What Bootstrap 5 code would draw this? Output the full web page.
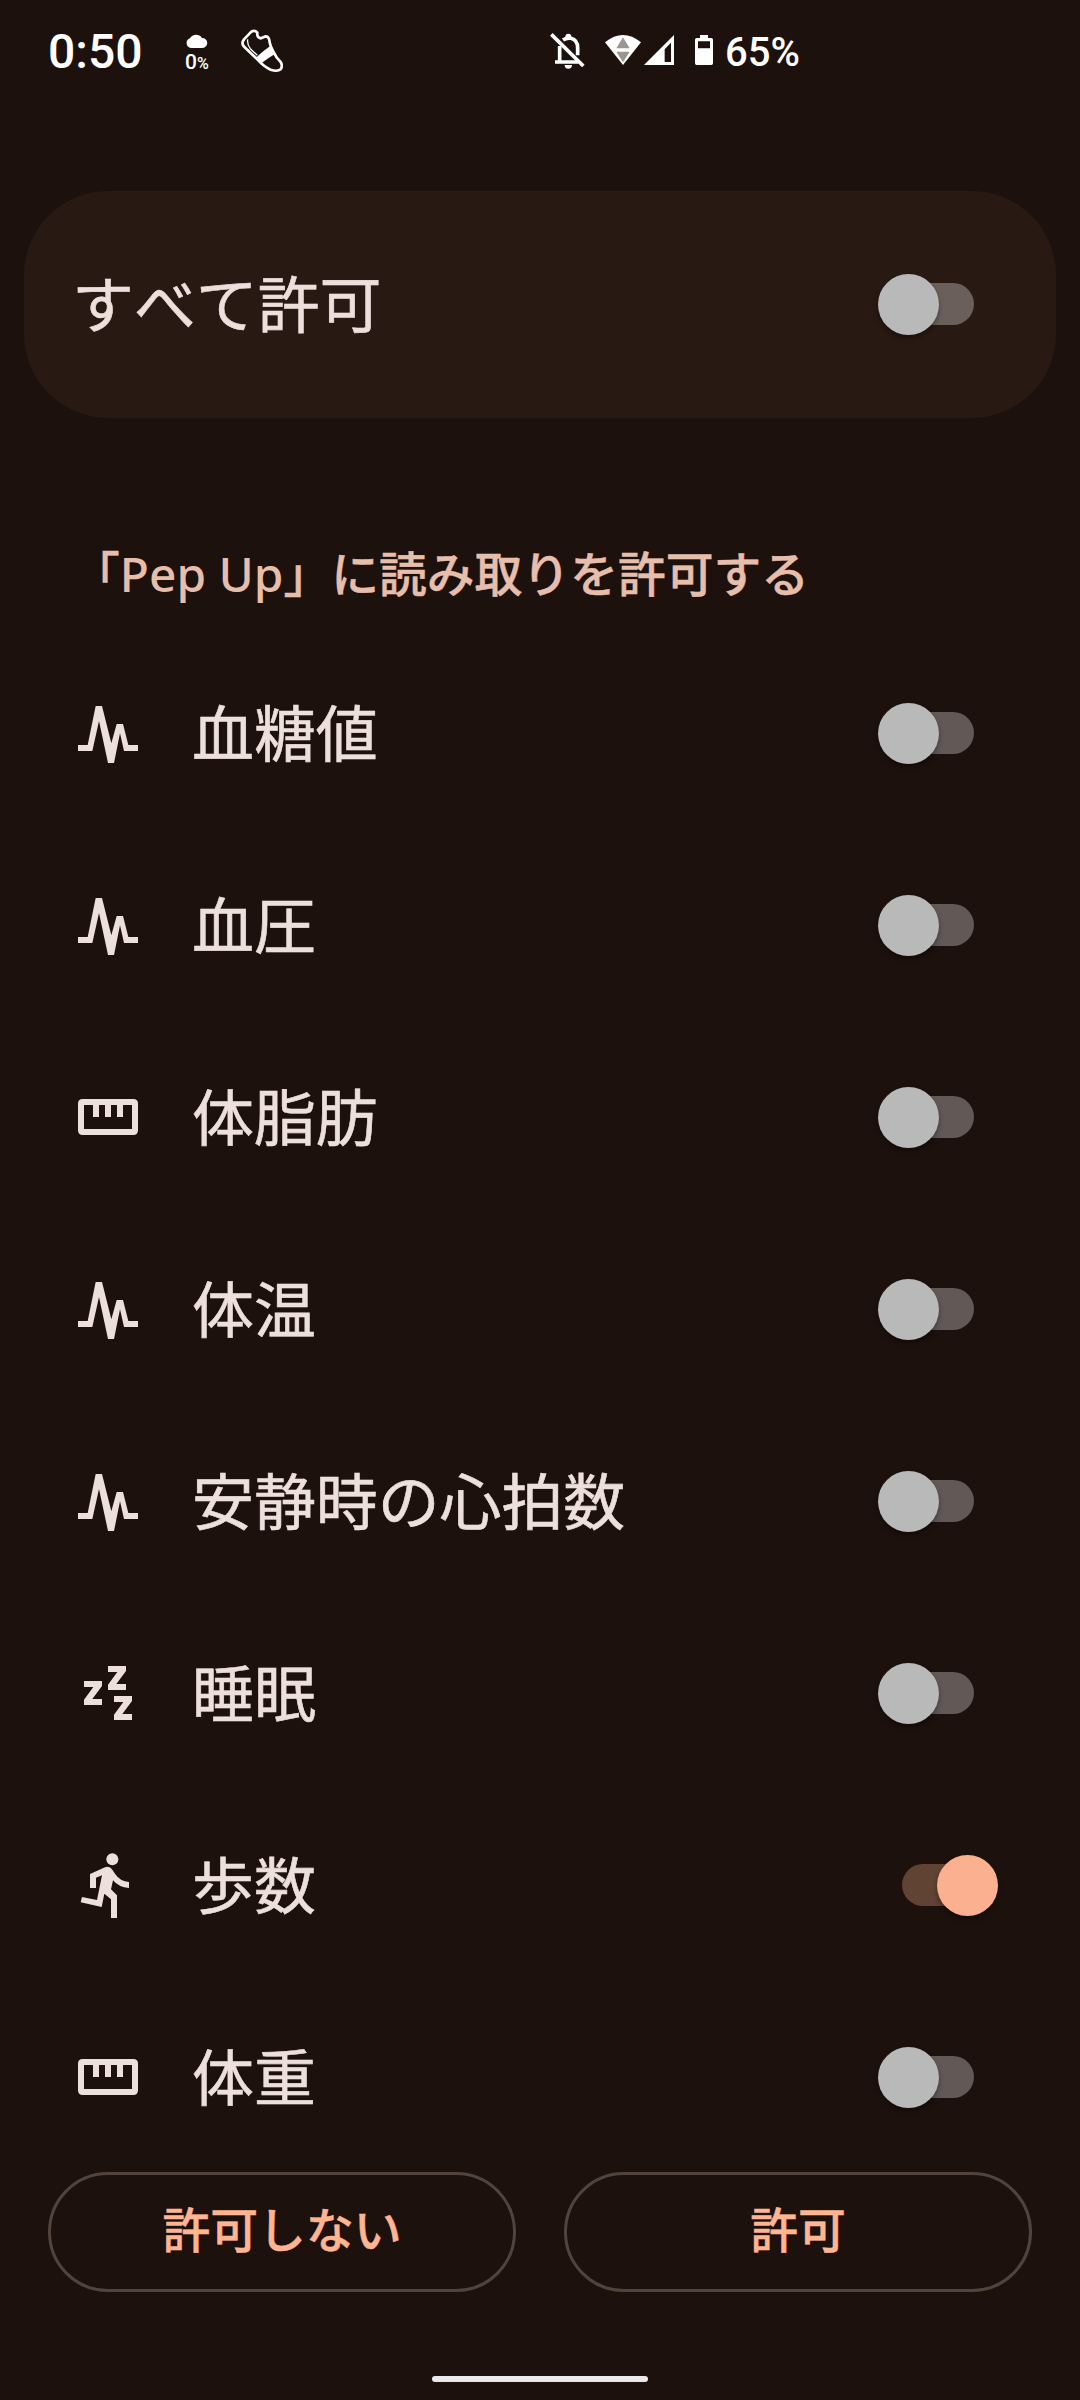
<!DOCTYPE html>
<html lang="ja" data-bs-theme="dark">
<head>
<meta charset="utf-8">
<meta name="viewport" content="width=device-width, initial-scale=1">
<title>Pep Up - 権限</title>
<link href="https://cdn.jsdelivr.net/npm/bootstrap@5.3.0/dist/css/bootstrap.min.css" rel="stylesheet">
<style>
  body { background: #1c110d; color: #eddfdc; font-family: "Noto Sans CJK JP", sans-serif; font-kerning: none; }
  .phone { width: 1080px; height: 2400px; }
  .statusbar { height: 100px; padding-left: 48px; color: #fff; font-family: Roboto, sans-serif; font-weight: 500; line-height: 1; }
  .clock { font-size: 48px; width: 138px; padding-top: 28px; }
  .rain { width: 55px; padding-top: 34px; }
  .rain-pct { font-size: 21px; line-height: 20px; margin-top: 4px; margin-left: -1px; }
  .rain-pct span { font-size: 16px; }
  .shoe { width: 42px; margin-top: 28px; }
  .bell { margin: 31px 0 0 266px; }
  .battery-pct { font-size: 40px; padding-top: 33px; margin-left: 12px; }
  .sig { margin-top: 35px; }
  .allow-all { height: 227px; margin: 91px 24px 0; padding: 0 58px 0 48px; border-radius: 84px; background: #281912; }
  .item-label { font-size: 61.9px; line-height: 92px; padding-bottom: 7px; -webkit-text-stroke: .6px currentColor; }
  .section-title { height: 219px; padding: 124px 0 0 72px; font: 500 47.8px/60px "Noto Sans CJK JP", sans-serif; color: #e7beac; -webkit-text-stroke: .5px currentColor; }
  .app-name { font-family: "Noto Sans", sans-serif; -webkit-text-stroke: 0; }
  .perm { height: 192px; padding: 0 82px 0 72px; }
  .perm svg { width: 72px; height: 72px; fill: #eddfdc; margin-right: 48px; }
  .toggle { width: 120px; height: 62px; }
  .allow-all .toggle { margin-bottom: 1px; }
  .toggle-track { left: 20px; top: 10px; width: 76px; height: 42px; border-radius: 21px; background: #625855; }
  .allow-all .toggle-track { background: #6a5f5b; }
  .toggle-thumb { left: 0; top: 1px; width: 61px; height: 61px; border-radius: 50%; background: #b9b9b9; box-shadow: 0 3px 5px rgba(0,0,0,.35); }
  .toggle.is-on .toggle-track { left: 24px; background: #604333; }
  .toggle.is-on .toggle-thumb { left: 59px; background: #fbb18f; }
  .actions { padding: 0 48px; gap: 48px; margin-top: -1px; }
  .actions .btn { height: 120px; border: 3px solid #52443c; color: #ffb592; font-size: 47.8px; font-weight: 500; line-height: 72px; padding: 0 0 8px; -webkit-text-stroke: .5px currentColor; }
  .homebar { width: 216px; height: 6px; border-radius: 3px; background: #ebe9ec; margin: 84px auto 0; }
</style>
<script src="https://cdn.jsdelivr.net/npm/bootstrap@5.3.0/dist/js/bootstrap.bundle.min.js"></script>
</head>
<body>
<svg class="d-none">
  <symbol id="pulse" viewBox="66 51 216 216"><path d="M84 213V195H113L137 78H156L184 190L200 132H219L235 195H264V213H222L210 160L192 249H174L147 123L127 213Z"/></symbol>
  <symbol id="ruler" viewBox="66 63 216 216"><path fill-rule="evenodd" d="M98 117H250Q264 117 264 131V211Q264 225 250 225H98Q84 225 84 211V131Q84 117 98 117ZM102 135V207H246V135H219V171H201V135H183V171H165V135H147V171H129V135Z"/></symbol>
  <symbol id="sleep" viewBox="66 51 216 216"><path id="zed" d="M102 123H156V138L127 177H156V195H102V179L130 141H102Z"/><use href="#zed" x="72" y="-45"/><use href="#zed" x="90" y="45"/></symbol>
  <symbol id="steps" viewBox="66 57 216 216"><circle cx="187" cy="88" r="18"/><path d="M120 132L165 112Q179 107 187 119L196 133Q211 155 237 156V174Q206 172 189 151L183 178L201 196V264H183V208L163 191L155 231L92 217L96 201L141 210L156 136L138 143V174H120Z"/></symbol>
</svg>
<div class="phone d-flex flex-column overflow-hidden">
  <header class="statusbar d-flex align-items-start">
    <div class="clock">0:50</div>
    <div class="rain">
      <svg class="d-block" width="22" height="14" viewBox="0 0 22 14" fill="#fff"><path d="M5 14A5 5 0 0 1 4 4.300A7 7 0 0 1 16 4A5 5 0 0 1 16.500 14Z"/></svg>
      <div class="rain-pct">0<span>%</span></div>
    </div>
    <svg class="shoe" height="46" viewBox="633 54 126 138" fill="none" stroke="#fff" stroke-width="8" stroke-linejoin="round">
      <path d="M664 65Q674 59 682 68Q680 82 691 85Q699 83 706 79Q716 79 718 91Q720 108 733 130Q738 143 752 156Q759 168 752 178Q742 186 722 179Q702 170 682 148L644 112Q632 101 642 88Z"/>
      <path fill="#fff" stroke="none" d="M721 108L735 133Q722 139 694 160L677 145Q690 130 721 108Z"/>
      <path stroke-width="4" d="M653 88Q651 104 661 116L682 136"/>
    </svg>
    <svg class="bell" width="36" height="42" viewBox="0 0 108 126" fill="none" stroke="#fff" stroke-width="11">
      <path d="M7 10L103 105"/><path d="M32 45V93M18 93H88M42 27Q54 19 66 22Q86 27 86 51V73"/><path fill="#fff" stroke="none" d="M49 17A9 9 0 0 1 67 17V26H49ZM47 102H69A11 11 0 0 1 47 102Z"/>
    </svg>
    <svg class="sig" style="margin-left:20px" width="36" height="30" viewBox="0 0 108 90"><path fill="#fff" d="M0 22Q54 -22 108 22L54 90Z"/><path fill="#9b9593" d="M54 7L74 40H34ZM34 50H74L54 82Z"/></svg>
    <svg class="sig" style="margin-left:3px" width="30" height="30" viewBox="0 0 90 90"><path fill="#fff" fill-rule="evenodd" d="M90 0V90H0ZM81 23L62 43V81H81Z"/></svg>
    <svg class="sig" style="margin-left:21px" width="18" height="30" viewBox="0 0 54 90"><path fill="#fff" fill-rule="evenodd" d="M15 0H39V9H49Q54 9 54 14V85Q54 90 49 90H5Q0 90 0 85V14Q0 9 5 9H15ZM9 19V40H45V19Z"/></svg>
    <div class="battery-pct">65%</div>
  </header>

  <section class="allow-all d-flex align-items-center justify-content-between flex-shrink-0">
    <div class="item-label">すべて許可</div>
    <div class="toggle position-relative"><span class="toggle-track position-absolute"></span><span class="toggle-thumb position-absolute"></span></div>
  </section>

  <h2 class="section-title mb-0 flex-shrink-0">「<span class="app-name">Pep Up</span>」に読み取りを許可する</h2>

  <main class="flex-shrink-0">
    <div class="perm d-flex align-items-center"><svg><use href="#pulse"/></svg><div class="item-label flex-grow-1">血糖値</div><div class="toggle position-relative"><span class="toggle-track position-absolute"></span><span class="toggle-thumb position-absolute"></span></div></div>
    <div class="perm d-flex align-items-center"><svg><use href="#pulse"/></svg><div class="item-label flex-grow-1">血圧</div><div class="toggle position-relative"><span class="toggle-track position-absolute"></span><span class="toggle-thumb position-absolute"></span></div></div>
    <div class="perm d-flex align-items-center"><svg><use href="#ruler"/></svg><div class="item-label flex-grow-1">体脂肪</div><div class="toggle position-relative"><span class="toggle-track position-absolute"></span><span class="toggle-thumb position-absolute"></span></div></div>
    <div class="perm d-flex align-items-center"><svg><use href="#pulse"/></svg><div class="item-label flex-grow-1">体温</div><div class="toggle position-relative"><span class="toggle-track position-absolute"></span><span class="toggle-thumb position-absolute"></span></div></div>
    <div class="perm d-flex align-items-center"><svg><use href="#pulse"/></svg><div class="item-label flex-grow-1">安静時の心拍数</div><div class="toggle position-relative"><span class="toggle-track position-absolute"></span><span class="toggle-thumb position-absolute"></span></div></div>
    <div class="perm d-flex align-items-center"><svg><use href="#sleep"/></svg><div class="item-label flex-grow-1">睡眠</div><div class="toggle position-relative"><span class="toggle-track position-absolute"></span><span class="toggle-thumb position-absolute"></span></div></div>
    <div class="perm d-flex align-items-center"><svg><use href="#steps"/></svg><div class="item-label flex-grow-1">歩数</div><div class="toggle is-on position-relative"><span class="toggle-track position-absolute"></span><span class="toggle-thumb position-absolute"></span></div></div>
    <div class="perm d-flex align-items-center"><svg><use href="#ruler"/></svg><div class="item-label flex-grow-1">体重</div><div class="toggle position-relative"><span class="toggle-track position-absolute"></span><span class="toggle-thumb position-absolute"></span></div></div>
  </main>

  <footer class="flex-shrink-0">
    <div class="actions d-flex">
      <button class="btn rounded-pill flex-fill w-50" type="button">許可しない</button>
      <button class="btn rounded-pill flex-fill w-50" type="button">許可</button>
    </div>
    <div class="homebar"></div>
  </footer>
</div>
</body>
</html>
